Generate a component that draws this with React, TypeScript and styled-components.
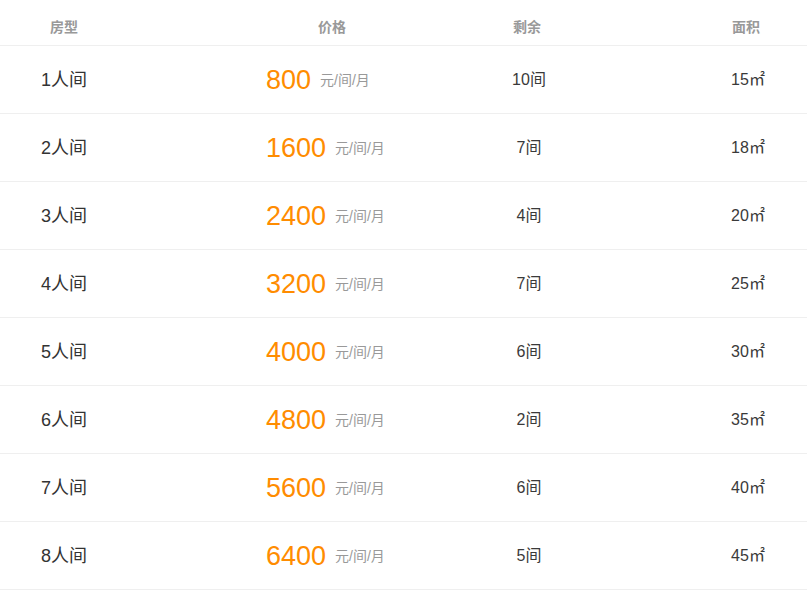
import React from "react";
import styled, { createGlobalStyle } from "styled-components";

const GlobalStyle = createGlobalStyle`
  html, body {
    margin: 0;
    padding: 0;
    background: #ffffff;
  }
  body {
    font-family: "Liberation Sans", "Noto Sans CJK SC", Arial, sans-serif;
  }
`;

const Table = styled.div`
  width: 807px;
  display: flex;
  flex-direction: column;
`;

const Row = styled.div<{ $head?: boolean }>`
  display: grid;
  grid-template-columns: 128px 72px 264px 130px 95px 1fr;
  height: ${(p) => (p.$head ? "46px" : "68px")};
  box-sizing: border-box;
  align-items: ${(p) => (p.$head ? "start" : "center")};
  padding-top: ${(p) => (p.$head ? "20px" : "0")};
  border-bottom: 1px solid #efefef;
`;

const Cell = styled.div<{ $col: number; $nudge?: number }>`
  grid-column: ${(p) => p.$col};
  display: flex;
  justify-content: center;
  align-items: center;
  padding-right: ${(p) => p.$nudge ?? 0}px;
  color: #333333;
  white-space: nowrap;
`;

const HeadText = styled.span`
  font-size: 14px;
  line-height: 15px;
  font-weight: bold;
  color: #999999;
`;

const RoomName = styled.span`
  font-size: 18px;
  line-height: 20px;
  color: #333333;
`;

const PriceBox = styled.div`
  width: 132px;
  display: flex;
  align-items: center;
  gap: 9px;
`;

const PriceNum = styled.span`
  font-size: 27px;
  line-height: 30px;
  color: #ff8c00;
`;

const PriceUnit = styled.span`
  font-size: 14px;
  line-height: 16px;
  color: #999999;
`;

const Plain = styled.span`
  font-size: 16px;
  line-height: 20px;
  color: #3a3a3a;
`;

const rows = [
  { name: "1人间", price: 800, left: 10, area: 15 },
  { name: "2人间", price: 1600, left: 7, area: 18 },
  { name: "3人间", price: 2400, left: 4, area: 20 },
  { name: "4人间", price: 3200, left: 7, area: 25 },
  { name: "5人间", price: 4000, left: 6, area: 30 },
  { name: "6人间", price: 4800, left: 2, area: 35 },
  { name: "7人间", price: 5600, left: 6, area: 40 },
  { name: "8人间", price: 6400, left: 5, area: 45 },
];

export default function App() {
  return (
    <>
      <GlobalStyle />
      <Table>
        <Row $head>
          <Cell $col={1}>
            <HeadText>房型</HeadText>
          </Cell>
          <Cell $col={3}>
            <HeadText>价格</HeadText>
          </Cell>
          <Cell $col={4} $nudge={4}>
            <HeadText>剩余</HeadText>
          </Cell>
          <Cell $col={6} $nudge={4}>
            <HeadText>面积</HeadText>
          </Cell>
        </Row>
        {rows.map((r) => (
          <Row key={r.name}>
            <Cell $col={1}>
              <RoomName>{r.name}</RoomName>
            </Cell>
            <Cell $col={3}>
              <PriceBox>
                <PriceNum>{r.price}</PriceNum>
                <PriceUnit>元/间/月</PriceUnit>
              </PriceBox>
            </Cell>
            <Cell $col={4}>
              <Plain>{r.left}间</Plain>
            </Cell>
            <Cell $col={6}>
              <Plain>{r.area}㎡</Plain>
            </Cell>
          </Row>
        ))}
      </Table>
    </>
  );
}
